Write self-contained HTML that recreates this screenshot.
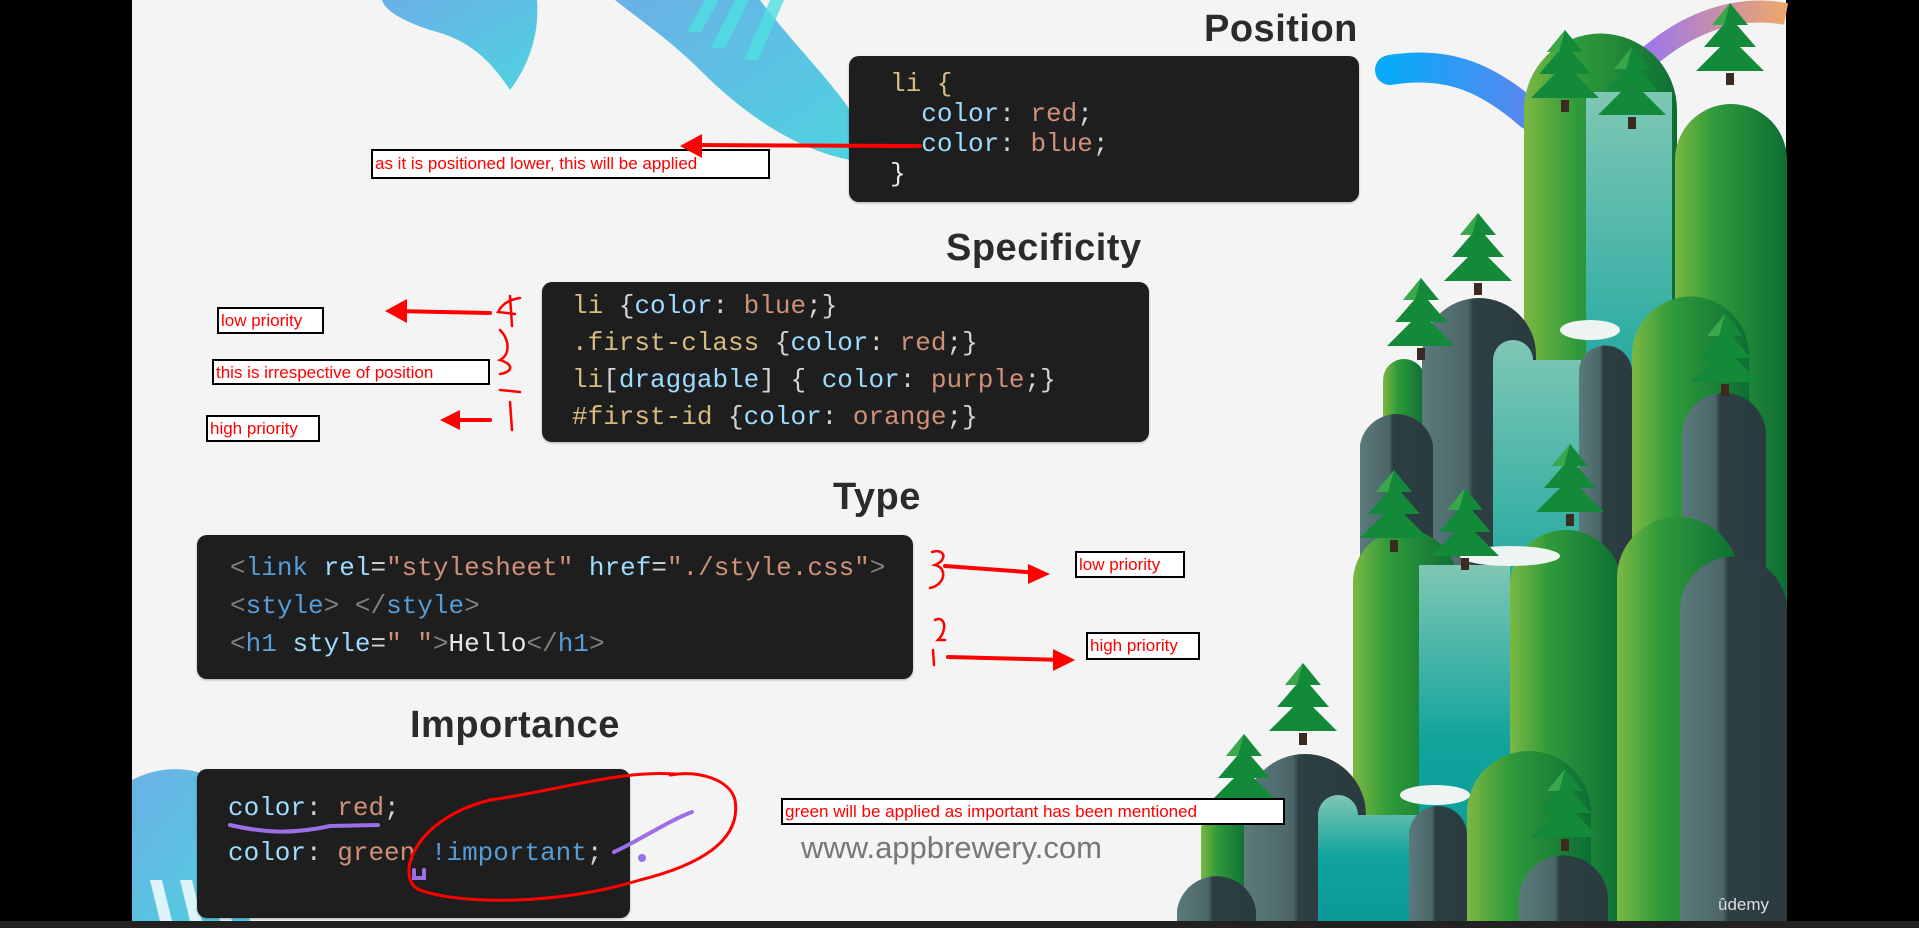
<!DOCTYPE html>
<html><head><meta charset="utf-8"><style>
*{margin:0;padding:0;box-sizing:border-box}
body{width:1919px;height:928px;background:#000;position:relative;overflow:hidden;font-family:"Liberation Sans",sans-serif}
#slide{position:absolute;left:132px;top:0;width:1654px;height:921px;background:#f4f4f4;overflow:hidden}
.abs{position:absolute}
.box{position:absolute;background:#1e1e1e;border-radius:10px;box-shadow:0 1px 2px rgba(0,0,0,.3)}
.code{position:absolute;font-family:"Liberation Mono",monospace;font-size:26px;color:#d4d4d4;white-space:pre;line-height:1}
.t{position:absolute;font-weight:bold;font-size:38px;color:#2b2b2b;letter-spacing:0.5px}
.k{color:#9cdcfe}.v{color:#ce9178}.s{color:#d7ba7d}.g{color:#808080}.n{color:#569cd6}.w{color:#e8e8e8}
.note{position:absolute;background:#fff;border:2px solid #000;color:#f00;font-size:17px;line-height:24px;padding:0 2px;white-space:nowrap}
</style></head><body>
<div id="slide"></div>
<svg class="abs" style="left:0;top:0" width="1919" height="928" viewBox="0 0 1919 928">
<defs>
<linearGradient id="bl" x1="0" y1="0" x2="1" y2="1"><stop offset="0" stop-color="#6ab0e6"/><stop offset="1" stop-color="#4fd2e0"/></linearGradient>
<linearGradient id="sw" x1="0" x2="1"><stop offset="0" stop-color="#09aaf9"/><stop offset="1" stop-color="#5a86ef"/></linearGradient>
<linearGradient id="arc" x1="0" x2="1"><stop offset="0" stop-color="#9d75ee"/><stop offset="1" stop-color="#eea86a"/></linearGradient>
<linearGradient id="gr" x1="0" x2="1"><stop offset="0" stop-color="#7bb843"/><stop offset="0.35" stop-color="#2f9a3a"/><stop offset="1" stop-color="#0d6e34"/></linearGradient>
<linearGradient id="te" x1="0" y1="0" x2="0" y2="1"><stop offset="0" stop-color="#7fc7b4"/><stop offset="0.5" stop-color="#10a39c"/><stop offset="1" stop-color="#0a9a98"/></linearGradient>
<linearGradient id="gy" x1="0" x2="1"><stop offset="0" stop-color="#5b7a7c"/><stop offset="0.4" stop-color="#4b6668"/><stop offset="0.45" stop-color="#2c3f43"/><stop offset="1" stop-color="#2a3b3f"/></linearGradient>
<g id="tree"><rect x="-4" y="70" width="8" height="12" fill="#3a2a20"/><path d="M0 0 L18 22 L-18 22Z M0 14 L26 44 L-26 44Z M0 34 L34 68 L-34 68Z" fill="#138a3a"/><path d="M0 0 L-18 22 L-6 22Z" fill="#3aa84a"/></g>
</defs>
<path d="M382 0 L537 0 C540 40 525 70 510 90 C490 60 470 40 430 30 C400 20 385 10 382 0Z" fill="url(#bl)"/>
<path d="M615 0 L760 0 C790 40 830 80 850 110 L850 160 C800 150 750 120 700 70 C670 40 640 20 615 0Z" fill="url(#bl)"/>
<path d="M705 0 l14 0 l-18 32 l-14 0Z M735 0 l14 0 l-24 48 l-14 0Z M770 0 l14 0 l-26 60 l-14 0Z" fill="#4fe0e0" opacity=".8"/>
<path d="M132 780 C170 760 210 770 230 790 L250 921 L132 921Z" fill="url(#bl)"/>
<path d="M150 880 l12 0 l10 41 l-12 0Z M180 880 l12 0 l10 41 l-12 0Z M210 880 l12 0 l10 41 l-12 0Z" fill="#fff" opacity=".8"/>
<path d="M1390 70 C1450 60 1490 80 1530 115" stroke="url(#sw)" stroke-width="30" fill="none" stroke-linecap="round"/>
<path d="M1645 60 C1690 20 1740 5 1786 14" stroke="url(#arc)" stroke-width="22" fill="none"/>
<path d="M1524 110 a76 76 0 0 1 153 0 V921 H1524Z" fill="url(#gr)"/>
<rect x="1586" y="92" width="86" height="700" fill="url(#te)"/>
<path d="M1675 160 a56 56 0 0 1 112 0 V921 H1675Z" fill="url(#gr)"/>
<path d="M1383 380 a21 21 0 0 1 42 0 V921 H1383Z" fill="url(#gr)"/>
<path d="M1422 355 a57 57 0 0 1 114 0 V921 H1422Z" fill="url(#gy)"/>
<path d="M1360 445 a37 37 0 0 1 73 0 V921 H1360Z" fill="url(#gy)"/>
<path d="M1493 360 a20 20 0 0 1 40 0 H1581 V921 H1493Z" fill="url(#te)"/>
<path d="M1579 372 a26 26 0 0 1 53 0 V921 H1579Z" fill="url(#gy)"/>
<path d="M1632 355 a58 58 0 0 1 117 0 V921 H1632Z" fill="url(#gr)"/>
<path d="M1682 435 a42 42 0 0 1 84 0 V921 H1682Z" fill="url(#gy)"/>
<path d="M1353 582 a52 52 0 0 1 104 0 V921 H1353Z" fill="url(#gr)"/>
<rect x="1419" y="565" width="91" height="356" fill="url(#te)"/>
<path d="M1510 586 a56 56 0 0 1 112 0 V921 H1510Z" fill="url(#gr)"/>
<path d="M1617 578 a61 61 0 0 1 122 0 V921 H1617Z" fill="url(#gr)"/>
<path d="M1680 610 a53 53 0 0 1 107 0 V921 H1680Z" fill="url(#gy)"/>
<path d="M1201 830 a23 23 0 0 1 46 0 V921 H1201Z" fill="url(#gr)"/>
<path d="M1244 815 a61 61 0 0 1 122 0 V921 H1244Z" fill="url(#gy)"/>
<path d="M1318 815 a20 20 0 0 1 40 0 H1419 V921 H1318Z" fill="url(#te)"/>
<path d="M1409 835 a29 29 0 0 1 58 0 V921 H1409Z" fill="url(#gy)"/>
<path d="M1467 813 a62 62 0 0 1 124 0 V921 H1467Z" fill="url(#gr)"/>
<path d="M1177 910 a40 40 0 0 1 79 0 V921 H1177Z" fill="url(#gy)"/>
<path d="M1519 900 a44 44 0 0 1 89 0 V921 H1519Z" fill="url(#gy)"/>
<ellipse cx="1590" cy="330" rx="30" ry="10" fill="#eef4f2"/>
<ellipse cx="1510" cy="556" rx="50" ry="10" fill="#eef4f2"/>
<ellipse cx="1435" cy="795" rx="35" ry="10" fill="#eef4f2"/>
<use href="#tree" x="1565" y="30"/><use href="#tree" x="1632" y="47"/><use href="#tree" x="1730" y="3"/>
<use href="#tree" x="1478" y="213"/><use href="#tree" x="1421" y="278"/><use href="#tree" x="1725" y="314"/>
<use href="#tree" x="1394" y="470"/><use href="#tree" x="1465" y="488"/><use href="#tree" x="1570" y="444"/>
<use href="#tree" x="1303" y="663"/><use href="#tree" x="1244" y="734"/><use href="#tree" x="1565" y="769"/>
<text x="1718" y="910" font-family="Liberation Sans" font-size="17" fill="#ddd">ûdemy</text>
<rect x="0" y="921" width="1919" height="7" fill="#222"/>
</svg>

<div class="t" style="left:1204px;top:8px">Position</div>
<div class="box" style="left:849px;top:56px;width:510px;height:146px"></div>
<div class="code" style="left:890px;top:69px;line-height:30px"><span class="s">li {</span>
  <span class="k">color</span>: <span class="v">red</span>;
  <span class="k">color</span>: <span class="v">blue</span>;
<span class="w">}</span></div>

<div class="t" style="left:946px;top:227px">Specificity</div>
<div class="box" style="left:542px;top:282px;width:607px;height:160px"></div>
<div class="code" style="left:572px;top:288px;line-height:37px"><span class="s">li</span> {<span class="k">color</span>: <span class="v">blue</span>;}
<span class="s">.first-class</span> {<span class="k">color</span>: <span class="v">red</span>;}
<span class="s">li</span>[<span class="k">draggable</span>] { <span class="k">color</span>: <span class="v">purple</span>;}
<span class="s">#first-id</span> {<span class="k">color</span>: <span class="v">orange</span>;}</div>

<div class="t" style="left:833px;top:476px">Type</div>
<div class="box" style="left:197px;top:535px;width:716px;height:144px"></div>
<div class="code" style="left:230px;top:549px;line-height:38px"><span class="g">&lt;</span><span class="n">link</span> <span class="k">rel</span>=<span class="v">"stylesheet"</span> <span class="k">href</span>=<span class="v">"./style.css"</span><span class="g">&gt;</span>
<span class="g">&lt;</span><span class="n">style</span><span class="g">&gt;</span> <span class="g">&lt;/</span><span class="n">style</span><span class="g">&gt;</span>
<span class="g">&lt;</span><span class="n">h1</span> <span class="k">style</span>=<span class="v">" "</span><span class="g">&gt;</span><span class="w">Hello</span><span class="g">&lt;/</span><span class="n">h1</span><span class="g">&gt;</span></div>

<div class="t" style="left:410px;top:704px;font-weight:600">Importance</div>
<div class="box" style="left:197px;top:769px;width:433px;height:149px"></div>
<div class="code" style="left:228px;top:786px;line-height:45px"><span class="k">color</span>: <span class="v">red</span>;
<span class="k">color</span>: <span class="v">green</span> <span class="n">!important</span>;</div>
<div class="abs" style="left:801px;top:830px;font-size:31px;color:#777">www.appbrewery.com</div>

<div class="note" style="left:371px;top:149px;width:399px;height:30px;line-height:26px">as it is positioned lower, this will be applied</div>
<div class="note" style="left:217px;top:307px;width:107px;height:27px">low priority</div>
<div class="note" style="left:212px;top:359px;width:278px;height:26px">this is irrespective of position</div>
<div class="note" style="left:206px;top:415px;width:114px;height:27px">high priority</div>
<div class="note" style="left:1075px;top:551px;width:110px;height:27px">low priority</div>
<div class="note" style="left:1086px;top:632px;width:114px;height:28px">high priority</div>
<div class="note" style="left:781px;top:798px;width:504px;height:27px">green will be applied as important has been mentioned</div>

<svg class="abs" style="left:0;top:0;pointer-events:none" width="1919" height="928">
<g stroke="#f00" fill="none" stroke-linecap="round" stroke-width="4">
<path d="M920 146 L690 145"/><path d="M490 313 L395 311"/><path d="M490 420 L455 420"/><path d="M945 566 L1040 573"/><path d="M948 657 L1065 660"/>
<path stroke-width="2.5" d="M520 298 C505 300 500 308 498 312 L515 314 M510 296 L512 326 M500 330 C510 340 510 355 500 360 C515 365 512 372 500 374 M500 390 L520 392 M510 402 L512 430 M932 552 C945 548 948 560 935 565 C948 568 945 585 930 588 M935 620 C945 615 948 630 938 640 L945 640 M933 650 L934 665"/>
<path stroke-width="3" d="M675 774 C620 770 560 790 490 800 C410 820 395 880 420 890 C460 905 560 905 640 880 C720 860 740 830 735 800 C730 780 700 770 670 775"/>
</g>
<g fill="#f00"><path d="M680 146 l22 -12 l0 24Z"/><path d="M385 311 l22 -12 l0 24Z"/><path d="M440 420 l20 -10 l0 20Z"/><path d="M1050 574 l-22 -10 l0 20Z"/><path d="M1075 660 l-22 -11 l0 22Z"/></g>
<g stroke="#9b6fe6" stroke-width="4" fill="none" stroke-linecap="round"><path d="M230 825 C260 832 290 835 330 826 L378 825"/><path d="M614 852 C640 840 670 820 692 812"/><path d="M414 870 l0 8 l10 0 l0 -8"/></g>
<circle cx="642" cy="858" r="4" fill="#9b6fe6"/>
</svg>
</body></html>
